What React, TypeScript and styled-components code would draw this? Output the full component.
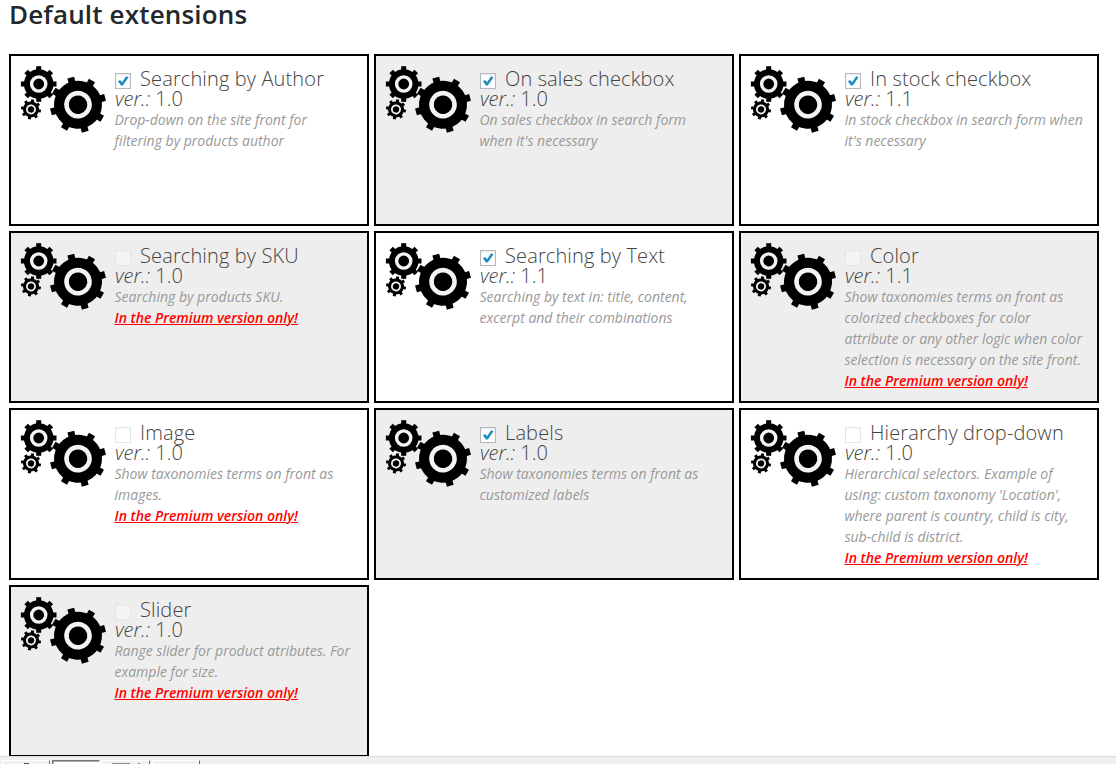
import React from "react";
import styled, { createGlobalStyle } from "styled-components";

const GlobalStyle = createGlobalStyle`
  *, *::before, *::after { box-sizing: border-box; }
  body { margin: 0; background: #fff; font-family: "Open Sans", "Noto Sans", sans-serif; }
`;

const Screen = styled.div`
  height: 764px;
  display: flex;
  flex-direction: column;
  overflow: hidden;
`;

const Content = styled.main`
  flex: 1;
  min-height: 0;
  overflow: hidden;
  padding-left: 9px;
`;

const Heading = styled.h2`
  margin: 0;
  height: 54px;
  font-size: 26px;
  font-weight: 600;
  line-height: 28px;
  letter-spacing: 0.16px;
  color: #23282d;
  white-space: nowrap;
`;

const Grid = styled.ul`
  margin: 0;
  padding: 0;
  list-style: none;
  display: grid;
  grid-template-columns: repeat(3, 360px);
  grid-auto-rows: 172px;
  gap: 5px;
`;

const Card = styled.li<{ $shaded: boolean }>`
  display: flex;
  border: 2px solid #000;
  padding: 10px 8px 0 9px;
  background: ${(p) => (p.$shaded ? "#eeeeee" : "#ffffff")};
`;

const Gears = styled.svg`
  flex: none;
  width: 94px;
  height: 70px;
`;

const Details = styled.div`
  flex: 1;
  min-width: 0;
  padding: 3px 0 0 0.5px;
`;

const NameRow = styled.label`
  display: flex;
  align-items: center;
  height: 20px;
  font-size: 20px;
  font-weight: 300;
  line-height: 20px;
  letter-spacing: 0.13px;
  color: #444;
  white-space: nowrap;
`;

const Box = styled.span<{ $disabled: boolean }>`
  flex: none;
  display: flex;
  width: 16px;
  height: 16px;
  margin: 4px 9px 0 0.5px;
  border: 1px solid ${(p) => (p.$disabled ? "#e6e6e6" : "#b4b9be")};
  background: ${(p) => (p.$disabled ? "rgba(255,255,255,.4)" : "#fff")};
  box-shadow: inset 0 1px 2px rgba(0, 0, 0, ${(p) => (p.$disabled ? 0.03 : 0.1)});
`;

const Version = styled.div`
  height: 20px;
  padding-left: 0.4px;
  font-size: 20px;
  font-weight: 300;
  line-height: 20px;
  color: #444;
`;

const Description = styled.p`
  margin: 0;
  font-size: 14px;
  font-style: italic;
  line-height: 21px;
  color: #999;
  white-space: nowrap;
`;

const Premium = styled.a`
  display: block;
  font-size: 14px;
  font-style: italic;
  font-weight: 600;
  line-height: 21px;
  color: #f00;
  text-decoration: underline;
  white-space: nowrap;
`;

const Taskbar = styled.footer`
  flex: none;
  display: flex;
  gap: 2px;
  height: 8px;
  padding: 3px 0 0 2px;
  border-top: 1px solid #dcdcdc;
  background: #f0f0f0;
  overflow: hidden;
`;

const Task = styled.div<{ $active?: boolean }>`
  display: flex;
  justify-content: center;
  width: 48px;
  height: 12px;
  padding-top: 2px;
  border: 1px solid #fff;
  border-right: 1px solid #696969;
  ${(p) => p.$active && "border: 1px solid #777; border-right-color: #fff; box-shadow: inset 1px 1px #aaa; background: #fff;"}
`;

const Mark = styled.span<{ $w: number; $c: string }>`
  width: ${(p) => p.$w}px;
  height: 2px;
  margin: 0 4px;
  background: ${(p) => p.$c};
`;

type GearProps = { x: number; y: number; outer: number; body: number; ring: number; hub: number; tooth: number; turn: number };

function Gear({ x, y, outer, body, ring, hub, tooth, turn }: GearProps) {
  return (
    <g transform={`translate(${x} ${y}) rotate(${turn})`}>
      {[0, 45, 90, 135, 180, 225, 270, 315].map((a) => (
        <rect key={a} x={body - 2} y={-tooth / 2} width={outer - body + 2} height={tooth} transform={`rotate(${a})`} />
      ))}
      <circle r={body} />
      <circle r={(ring + hub) / 2} fill="none" stroke="#f4f4f4" strokeWidth={ring - hub} />
    </g>
  );
}

type Extension = { name: string; version: string; lines: string[]; checked?: boolean; premium?: boolean };

const extensions: Extension[] = [
  { name: "Searching by Author", version: "1.0", lines: ["Drop-down on the site front for", "filtering by products author"], checked: true },
  { name: "On sales checkbox", version: "1.0", lines: ["On sales checkbox in search form", "when it's necessary"], checked: true },
  { name: "In stock checkbox", version: "1.1", lines: ["In stock checkbox in search form when", "it's necessary"], checked: true },
  { name: "Searching by SKU", version: "1.0", lines: ["Searching by products SKU."], premium: true },
  { name: "Searching by Text", version: "1.1", lines: ["Searching by text in: title, content,", "excerpt and their combinations"], checked: true },
  { name: "Color", version: "1.1", lines: ["Show taxonomies terms on front as", "colorized checkboxes for color", "attribute or any other logic when color", "selection is necessary on the site front."], premium: true },
  { name: "Image", version: "1.0", lines: ["Show taxonomies terms on front as", "images."], premium: true },
  { name: "Labels", version: "1.0", lines: ["Show taxonomies terms on front as", "customized labels"], checked: true },
  { name: "Hierarchy drop-down", version: "1.0", lines: ["Hierarchical selectors. Example of", "using: custom taxonomy 'Location',", "where parent is country, child is city,", "sub-child is district."], premium: true },
  { name: "Slider", version: "1.0", lines: ["Range slider for product atributes. For", "example for size."], premium: true },
];

function ExtensionCard({ item, shaded }: { item: Extension; shaded: boolean }) {
  return (
    <Card $shaded={shaded}>
      <Gears viewBox="0 0 94 70">
        <Gear x={18.7} y={18} outer={17.8} body={14.8} ring={8.8} hub={5.4} tooth={5} turn={0} />
        <Gear x={58} y={38.7} outer={28} body={24} ring={13.8} hub={9.3} tooth={7} turn={-15} />
        <Gear x={11} y={43.4} outer={10} body={8} ring={5} hub={3.2} tooth={3} turn={10} />
      </Gears>
      <Details>
        <NameRow>
          <Box $disabled={!item.checked}>
            {item.checked && (
              <svg width="14" height="14" viewBox="0 0 14 14">
                <path d="M1.9 7.2 4.2 6 6 8.3 10.2 2.2 12.6 3.2 6.8 11.6 5 11.6Z" fill="#1e8cbe" />
              </svg>
            )}
          </Box>
          {item.name}
        </NameRow>
        <Version><em>ver.:</em> {item.version}</Version>
        <Description>
          {item.lines.map((line, i) => (
            <React.Fragment key={line}>{i > 0 && <br />}{line}</React.Fragment>
          ))}
        </Description>
        {item.premium && <Premium>In the Premium version only!</Premium>}
      </Details>
    </Card>
  );
}

export default function App() {
  return (
    <Screen>
      <GlobalStyle />
      <Content>
        <Heading>Default extensions</Heading>
        <Grid>
          {extensions.map((item, i) => (
            <ExtensionCard key={item.name} item={item} shaded={i % 2 === 1} />
          ))}
        </Grid>
      </Content>
      <Taskbar>
        <Task><Mark $w={5} $c="#556" /></Task>
        <Task $active />
        <Task><Mark $w={18} $c="#888" /><Mark $w={2} $c="#b67" /></Task>
        <Task />
      </Taskbar>
    </Screen>
  );
}
